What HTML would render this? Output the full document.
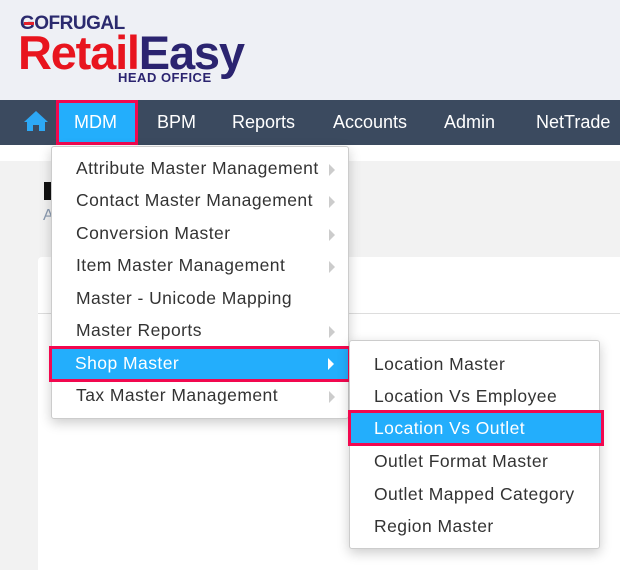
<!DOCTYPE html>
<html><head><style>
*{margin:0;padding:0;box-sizing:border-box}
body{width:620px;height:570px;overflow:hidden;position:relative;background:#f2f2f2;font-family:"Liberation Sans",sans-serif}
.abs{position:absolute}
.hdr{left:0;top:0;width:620px;height:100px;background:#eef0f5}
.nav{left:0;top:100px;width:620px;height:45px;background:#3b4a5f}
.nav span{position:absolute;top:12px;color:#fff;font-size:18px}
.menu{background:#fff;border:1px solid #ccc;border-radius:3px;box-shadow:0 4px 12px rgba(0,0,0,.2)}
.it{position:absolute;left:24px;font-size:17.5px;color:#333;white-space:nowrap;letter-spacing:0.45px}
.ar{position:absolute;width:0;height:0;border-top:6px solid transparent;border-bottom:6px solid transparent;border-left:6px solid #ccc}
</style></head><body>
<div class="abs hdr"></div>
<div class="abs" style="left:20px;top:13px;font-size:19px;font-weight:bold;color:#2b2a6e;letter-spacing:-0.5px">G<span style="color:#2b2a6e">OFRUGAL</span></div>
<div class="abs" style="left:24px;top:22px;width:10px;height:3px;background:#e2202a"></div>
<div class="abs" style="left:18px;top:28px;font-size:47px;font-weight:bold;letter-spacing:-1.2px;line-height:50px"><span style="color:#e8141e">Retail</span><span style="color:#2b2470">Easy</span></div>
<div class="abs" style="left:118px;top:70px;font-size:13px;font-weight:bold;color:#2b2470;letter-spacing:0.5px">HEAD OFFICE</div>
<div class="abs nav">
<svg style="position:absolute;left:23px;top:10px" width="26" height="22" viewBox="0 0 26 22"><path d="M13 1 L1 12 H4 V21 H10 V15 H16 V21 H22 V12 H25 Z" fill="#2da8f5"/></svg>
<div style="position:absolute;left:56px;top:0;width:82px;height:45px;background:#23aefc;border:3px solid #f2084f"></div>
<span style="left:74px">MDM</span>
<span style="left:157px">BPM</span>
<span style="left:232px">Reports</span>
<span style="left:333px">Accounts</span>
<span style="left:444px">Admin</span>
<span style="left:536px">NetTrade</span>
</div>
<div class="abs" style="left:0;top:145px;width:620px;height:16px;background:#fff"></div>
<div class="abs" style="left:44px;top:182px;width:10px;height:18px;background:#111"></div>
<div class="abs" style="left:43px;top:207px;color:#8a9ab0;font-size:16px">A</div>
<div class="abs" style="left:38px;top:257px;width:582px;height:313px;background:#fff;border-radius:4px 0 0 0"></div>
<div class="abs" style="left:38px;top:313px;width:582px;height:1px;background:#ddd"></div>
<div class="abs menu" style="left:51px;top:146px;width:298px;height:273px">
<div class="it" style="top:11px">Attribute Master Management</div>
<div class="it" style="top:43px">Contact Master Management</div>
<div class="it" style="top:76px">Conversion Master</div>
<div class="it" style="top:108px">Item Master Management</div>
<div class="it" style="top:141px">Master - Unicode Mapping</div>
<div class="it" style="top:173px">Master Reports</div>
<div class="it" style="top:238px">Tax Master Management</div>
<div class="ar" style="left:277px;top:17px"></div>
<div class="ar" style="left:277px;top:49px"></div>
<div class="ar" style="left:277px;top:82px"></div>
<div class="ar" style="left:277px;top:114px"></div>
<div class="ar" style="left:277px;top:179px"></div>
<div class="ar" style="left:277px;top:244px"></div>
</div>
<div class="abs" style="left:49px;top:346px;width:302px;height:36px;background:#23aefc;border:3px solid #f2084f"></div>
<div class="abs" style="left:75px;top:353px;font-size:17.5px;color:#fff;letter-spacing:0.45px">Shop Master</div>
<div class="ar" style="left:328px;top:358px;border-left-color:#fff"></div>
<div class="abs menu" style="left:349px;top:340px;width:251px;height:209px">
<div class="it" style="top:13px">Location Master</div>
<div class="it" style="top:45px">Location Vs Employee</div>
<div class="it" style="top:110px">Outlet Format Master</div>
<div class="it" style="top:143px">Outlet Mapped Category</div>
<div class="it" style="top:175px">Region Master</div>
</div>
<div class="abs" style="left:348px;top:410px;width:256px;height:36px;background:#23aefc;border:3px solid #f2084f"></div>
<div class="abs" style="left:374px;top:418px;font-size:17.5px;color:#fff;letter-spacing:0.45px">Location Vs Outlet</div>
</body></html>
